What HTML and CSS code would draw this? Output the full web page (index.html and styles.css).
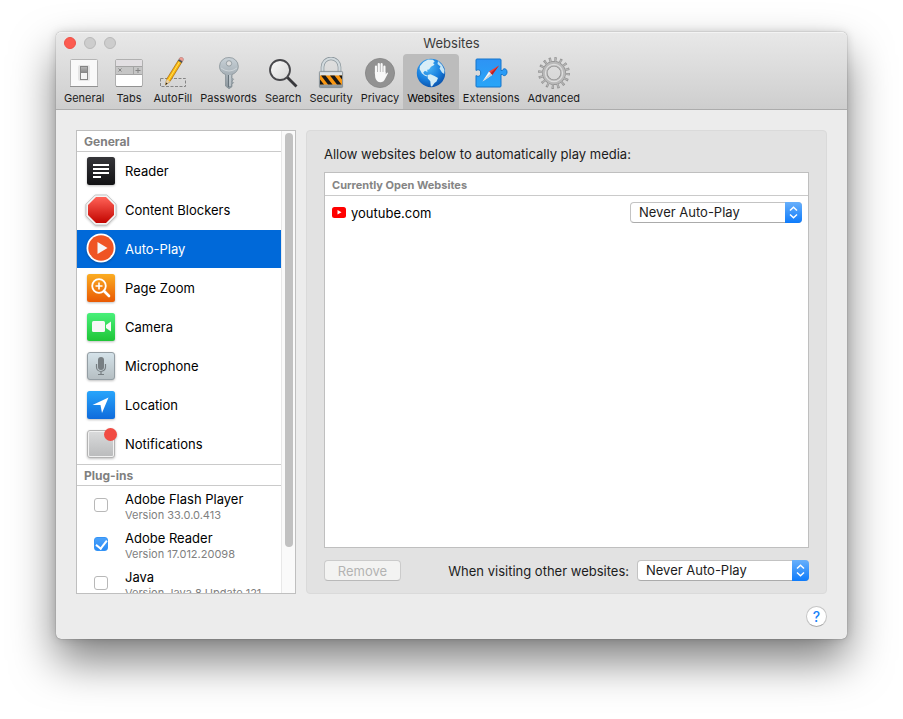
FILE: index.html
```html
<!DOCTYPE html>
<html lang="en">
<head>
<meta charset="utf-8">
<title>Websites</title>
<link rel="stylesheet" href="styles.css">
</head>
<body>
<svg class="defs" width="0" height="0" aria-hidden="true">
  <defs>
    <linearGradient id="steel" x2="0" y2="1"><stop stop-color="#c9d2d8"/><stop offset="1" stop-color="#8a949b"/></linearGradient>
    <linearGradient id="silver" x2="1" y2="1"><stop stop-color="#fafafa"/><stop offset="1" stop-color="#d5d5d5"/></linearGradient>
    <linearGradient id="gray" x2="0" y2="1"><stop stop-color="#b4b4b4"/><stop offset="1" stop-color="#858585"/></linearGradient>
    <radialGradient id="ocean" cx=".4" cy=".3" r=".75"><stop stop-color="#4db8f8"/><stop offset=".6" stop-color="#167ddd"/><stop offset="1" stop-color="#0b4fa6"/></radialGradient>
    <linearGradient id="puzzle" x2="0" y2="1"><stop stop-color="#2e93f4"/><stop offset="1" stop-color="#27a5f8"/></linearGradient>
    <linearGradient id="black" x2="0" y2="1"><stop stop-color="#353539"/><stop offset="1" stop-color="#121214"/></linearGradient>
    <linearGradient id="red" x2="0" y2="1"><stop stop-color="#ff6257"/><stop offset="1" stop-color="#c20500"/></linearGradient>
    <linearGradient id="orange" x2="0" y2="1"><stop stop-color="#fbad22"/><stop offset="1" stop-color="#e95903"/></linearGradient>
    <linearGradient id="green" x2="0" y2="1"><stop stop-color="#48f07a"/><stop offset="1" stop-color="#1fc537"/></linearGradient>
    <linearGradient id="mist" x2="0" y2="1"><stop stop-color="#d5e3ea"/><stop offset="1" stop-color="#b5bec2"/></linearGradient>
    <linearGradient id="blue" x2="0" y2="1"><stop stop-color="#28a5fb"/><stop offset="1" stop-color="#0f6bdc"/></linearGradient>
    <linearGradient id="note" x2="0" y2="1"><stop stop-color="#d9dadb"/><stop offset="1" stop-color="#bbbcbd"/></linearGradient>
  </defs>
</svg>

<main class="window">
  <header class="chrome">
    <div class="titlebar">
      <div class="lights">
        <button class="light close" aria-label="Close"></button>
        <button class="light" aria-label="Minimize" disabled></button>
        <button class="light" aria-label="Zoom" disabled></button>
      </div>
      <h1>Websites</h1>
    </div>
    <nav class="toolbar">
      <button class="tool">
        <svg viewBox="0 0 32 32"><rect x="2.500" y="2.500" width="27" height="27" rx="1" fill="#f9f9f9" stroke="#b5b5b5"/><path d="M2 29.500h28" stroke="#919191"/><rect x="10" y="8" width="12" height="16" rx="2" fill="#e5e5e5"/><rect x="12.500" y="9.500" width="7" height="13" fill="#f4f4f4" stroke="#858585"/><rect x="13" y="10" width="6" height="6" fill="url(#gray)"/></svg>
        <span>General</span>
      </button>
      <button class="tool">
        <svg viewBox="0 0 32 32"><rect x="2.500" y="2.500" width="27" height="27" rx="1.500" fill="#fff" stroke="#b0b0b0"/><path d="M3 3h26v6H3z" fill="#e2dfe2"/><path d="M3 9h26v8H3z" fill="#c6c6c6"/><path d="M3 9.500h26M3 17.500h26M20.500 9v8" stroke="#a4a4a4"/><path d="m5.500 11.500 3 3m0-3-3 3M22.500 13.500h5M25 11v5" stroke="#858585"/><path d="M3 29.500h26" stroke="#929292"/></svg>
        <span>Tabs</span>
      </button>
      <button class="tool">
        <svg viewBox="0 0 32 32"><rect x="3.500" y="21.500" width="25" height="8" fill="none" stroke="#858585" stroke-dasharray="3 1.500"/><path d="m8.500 28 1.200-6L21.500 3l3.500 2-12 19.500z" fill="#fbb50d" stroke="#9c6714" stroke-width=".7"/><path d="m11.500 23 11.500-19" stroke="#ffe35a"/><path d="m8.500 28 1.200-6 3.300 2.500z" fill="#ead1a3"/><path d="m8.500 28 .6-2.600 1.500 1z" fill="#222"/><path d="m21 3.800 3.700 2.200 1-1.700-3.700-2.200z" fill="#4c5258"/><path d="m22 2 3.700 2.300.7-1.300q.4-2-1.300-2.600-1.600-.4-2.300.4z" fill="#ef9c93" stroke="#a66e68" stroke-width=".5"/></svg>
        <span>AutoFill</span>
      </button>
      <button class="tool">
        <svg viewBox="0 0 32 32"><path fill-rule="evenodd" d="M16 .500a9 9 0 0 0-9.500 8.800c0 4 2.500 7 6 8.200V29l3.500 2.700 3-2v-2.500l1.500-1.500-1.500-1.500 1.500-2-1.500-1.500v-3.200c3.500-1.200 6.300-4.200 6.300-8.200A9 9 0 0 0 16 .5zm0 3.200a2.700 2.700 0 1 1 0 5.400 2.700 2.700 0 0 1 0-5.400z" fill="url(#steel)" stroke="#7e898f" stroke-width=".7"/><path d="M15.500 18v12" stroke="#67737b"/><path d="M17 18v11" stroke="#e0e6ea"/><path d="M8 11q8 6 16 0" fill="none" stroke="#e0e6ea" stroke-width=".6"/></svg>
        <span>Passwords</span>
      </button>
      <button class="tool">
        <svg viewBox="0 0 32 32"><path d="m20 20 9.500 9.500" stroke="#37373b" stroke-width="2.800"/><circle cx="13" cy="13" r="10" fill="url(#silver)" stroke="#47474b" stroke-width="1.800"/></svg>
        <span>Search</span>
      </button>
      <button class="tool">
        <svg viewBox="0 0 32 32"><path d="M7.500 15v-5a8.500 8.500 0 0 1 17 0v5" fill="none" stroke="#8b969c" stroke-width="3.600"/><path d="M7.500 15v-5a8.500 8.500 0 0 1 17 0v5" fill="none" stroke="#d2dade" stroke-width="2.200"/><rect x="4.400" y="14.400" width="23.200" height="16.200" rx="1" fill="url(#steel)" stroke="#7c868b" stroke-width=".8"/><path d="M5 15.500h22v3H5z" fill="#dde3e6"/><path d="M5 18.500h22v9H5z" fill="#fa9710"/><path d="M6 18.500h4.500l7 9H13zM15 18.500h4.500l7 9H22zM5 22.500l4 5H5zM24 18.500h3v4z" fill="#181818"/></svg>
        <span>Security</span>
      </button>
      <button class="tool">
        <svg viewBox="0 0 32 32"><circle cx="16" cy="16" r="14.600" fill="#929292" stroke="#848484" stroke-width=".8"/><path d="M12 17V9.500M14.800 16V7M17.600 16V7.200M20.400 17V9.500" stroke="#f8f8f8" stroke-width="2.200" stroke-linecap="round"/><path d="M10.900 15h10.600v2.500l1.300-1.500q1.200-.9 1.200.3L20.500 23q-.8 2-3.500 2.300-4.800.2-5.800-5z" fill="#f8f8f8"/></svg>
        <span>Privacy</span>
      </button>
      <button class="tool current" aria-current="page">
        <svg viewBox="0 0 32 32"><circle cx="16" cy="16" r="14.200" fill="url(#ocean)"/><path d="m5 9 3.500-4L13 2.600l5 .2 1.700 2L18 6l1.500 1.800-3.500 2-2 2.800-1.800.2.300 2.200-2.500-1.200-1.700 1.800 1 2.200 2.600.8-1-.1L7 16.500 4.500 12z" fill="#d9eef7"/><path d="m12.500 18 3-.8 4 1.800 3.500 2-1.500 3.500-2 1.500-2.500 3.500-1.200-.3-.5-5-2.500-2.700z" fill="#d4ecf6"/><path d="m23 4 4 4 2.500 5-.3 4-2.200-1.500-2.500-4 1-2-3-2.500z" fill="#c4e5f6"/><path d="M8.500 17.500 12 19" stroke="#d4ecf6"/></svg>
        <span>Websites</span>
      </button>
      <button class="tool">
        <svg class="wide" viewBox="0 0 34 32"><path d="M2 3q0-1 1-1h23q1 0 1 1v10.500h1.500c.5-2.500 4.500-2.500 4.500 1.500s-4 4.500-4.500 2.500H27V29q0 1-1 1H3q-1 0-1-1V18.500c2 1.500 4.700 1 4.700-2.500S4 12.300 2 13.500z" fill="url(#puzzle)" stroke="#1475ca"/><path d="m25 8.500-10 6 3.200 3.500z" fill="#f1433a"/><path d="m8.500 24.500 6.500-10 3.200 3.500z" fill="#f7f7f7"/><path d="m25 8.500-8.500 7.800 1.700 1.700z" fill="#b92025"/><path d="m8.500 24.500 8-8.200 1.700 1.700z" fill="#c4ced6"/></svg>
        <span>Extensions</span>
      </button>
      <button class="tool">
        <svg viewBox="0 0 32 32"><circle cx="16" cy="16" r="13.600" fill="none" stroke="#8f8f8f" stroke-width="4.600" stroke-dasharray="2.200 3.141"/><circle cx="16" cy="16" r="9.200" fill="none" stroke="#8a8a8a" stroke-width="5.400"/><circle cx="16" cy="16" r="13.200" fill="none" stroke="#b5b5b5" stroke-width="4" stroke-dasharray="1.200 3.984" stroke-dashoffset="-.5"/><circle cx="16" cy="16" r="9.200" fill="none" stroke="#b9b9b9" stroke-width="4.200"/><circle cx="16" cy="16" r="8.600" fill="none" stroke="#dedede" stroke-width="1.200"/></svg>
        <span>Advanced</span>
      </button>
    </nav>
  </header>

  <div class="content">
    <aside class="sidebar">
      <div class="list">
        <h2>General</h2>
        <ul>
          <li><button class="row"><svg viewBox="0 0 32 32"><rect x="2" y="2" width="28" height="28" rx="2.500" fill="url(#black)"/><path d="M8 10h16M8 14h16M8 18h16M8 22h8" stroke="#fff" stroke-width="1.800"/></svg>Reader</button></li>
          <li><button class="row"><svg viewBox="0 0 32 32"><path d="M10.200 1h11.600L31 10.200v11.600L21.800 31H10.200L1 21.800V10.200z" fill="#f5f5f5" stroke="#bababa" stroke-width=".8"/><path d="M11 3h10l8 8v10l-8 8H11l-8-8V11z" fill="url(#red)"/></svg>Content Blockers</button></li>
          <li><button class="row selected" aria-current="true"><svg viewBox="0 0 32 32"><circle cx="16" cy="15" r="14.500" fill="#fff"/><circle cx="16" cy="15" r="12.700" fill="#ef5424"/><path d="M12.500 9v12L22.500 15z" fill="#f6f6f6"/></svg>Auto-Play</button></li>
          <li><button class="row"><svg viewBox="0 0 32 32"><rect x="2" y="2" width="28" height="28" rx="2.500" fill="url(#orange)"/><circle cx="14" cy="14" r="6.800" fill="none" stroke="#fff" stroke-width="1.800"/><path d="m19 19 5 5" stroke="#fff" stroke-width="2.600" stroke-linecap="round"/><path d="M14 10.500v7M10.500 14h7" stroke="#fff" stroke-width="1.600"/></svg>Page Zoom</button></li>
          <li><button class="row"><svg viewBox="0 0 32 32"><rect x="2" y="2" width="28" height="28" rx="2.500" fill="url(#green)"/><rect x="7" y="10" width="13" height="11" rx="1.500" fill="#f7f7f7"/><path d="m21 14 5-3.500v10L21 17z" fill="#f7f7f7"/></svg>Camera</button></li>
          <li><button class="row"><svg viewBox="0 0 32 32"><rect x="2.500" y="2.500" width="27" height="27" rx="2.500" fill="url(#mist)" stroke="#949ea4"/><rect x="13" y="7" width="6" height="13" rx="3" fill="#777e82"/><path d="M11.500 14v3a4.500 4.500 0 0 0 9 0v-3M16 21.500V24M13 24.500h6" fill="none" stroke="#777e82" stroke-width="1.200"/></svg>Microphone</button></li>
          <li><button class="row"><svg viewBox="0 0 32 32"><rect x="2" y="2" width="28" height="28" rx="2.500" fill="url(#blue)"/><path d="M23.500 8.500 7.500 16h8l1.500 8z" fill="#fff"/></svg>Location</button></li>
          <li><button class="row"><svg viewBox="0 0 32 32"><rect x="2.500" y="2.500" width="27" height="27" rx="2.500" fill="#f1f1f1" stroke="#b3b3b3"/><rect x="4" y="4" width="24" height="24" rx="1" fill="url(#note)"/><circle cx="25.500" cy="6.500" r="6.500" fill="#f14b43"/></svg>Notifications</button></li>
        </ul>
        <h2 class="divided">Plug-ins</h2>
        <ul>
          <li><label class="row plugin"><input type="checkbox"><span>Adobe Flash Player<small>Version 33.0.0.413</small></span></label></li>
          <li><label class="row plugin"><input type="checkbox" checked><span>Adobe Reader<small>Version 17.012.20098</small></span></label></li>
          <li><label class="row plugin"><input type="checkbox"><span>Java<small>Version Java 8 Update 121</small></span></label></li>
        </ul>
      </div>
      <div class="track"><div class="thumb"></div></div>
    </aside>

    <section class="panel">
      <p>Allow websites below to automatically play media:</p>
      <div class="sites">
        <h3>Currently Open Websites</h3>
        <div class="site">
          <svg viewBox="0 0 14 12"><rect width="14" height="11" rx="2.500" fill="#f00"/><path d="M5.500 3v4.600L9.500 5.300z" fill="#fff"/></svg>
          <label for="youtube">youtube.com</label>
          <span class="popup">
            <select id="youtube"><option>Never Auto-Play</option><option>Stop Media with Sound</option><option>Allow All Auto-Play</option></select>
            <svg viewBox="0 0 17 21"><path d="m5 8.500 3.500-3.300L12 8.500M5 12.500l3.500 3.300 3.500-3.300"/></svg>
          </span>
        </div>
      </div>
      <div class="actions">
        <button class="remove" disabled>Remove</button>
        <label for="others">When visiting other websites:</label>
        <span class="popup">
          <select id="others"><option>Never Auto-Play</option><option>Stop Media with Sound</option><option>Allow All Auto-Play</option></select>
          <svg viewBox="0 0 17 21"><path d="m5 8.500 3.500-3.300L12 8.500M5 12.500l3.500 3.300 3.500-3.300"/></svg>
        </span>
      </div>
    </section>
  </div>
  <footer><button class="help" aria-label="Help">?</button></footer>
</main>
</body>
</html>
```
FILE: styles.css
```css
* { box-sizing: border-box; }

body {
  margin: 0;
  height: 100vh;
  padding: 32px 56px 80px;
  display: flex;
  background: #fff;
  color: #1c1c1c;
  font: 13px/16px Inter, "Liberation Sans", sans-serif;
}

h1, h2, h3, p, ul { margin: 0; padding: 0; }
ul { list-style: none; }
button, select, input { margin: 0; font: inherit; color: inherit; }
button { padding: 0; border: 0; background: none; }
svg { display: block; flex: none; }
.defs { position: absolute; }

.window {
  flex: 1;
  min-width: 0;
  display: flex;
  flex-direction: column;
  background: #ececec;
  border-radius: 5px;
  box-shadow: 0 0 1px rgba(0, 0, 0, .6), 0 0 10px rgba(0, 0, 0, .15), 0 22px 44px rgba(0, 0, 0, .5);
}

.chrome {
  background: linear-gradient(#e8e8e8, #cecece);
  border-top: 1px solid #f3f3f3;
  border-bottom: 1px solid #acacac;
  border-radius: 5px 5px 0 0;
}

.titlebar {
  height: 21px;
  padding: 0 8px;
  display: grid;
  grid-template-columns: 1fr auto 1fr;
  align-items: center;
}
.titlebar h1 { font-size: 13px; line-height: 18px; font-weight: 400; color: #3b3b3b; padding-bottom: 2px; }
.lights { display: flex; gap: 8px; padding-bottom: 1px; }
.light {
  width: 12px;
  height: 12px;
  border: 1px solid #b9b9b9;
  border-radius: 50%;
  background: #cdcdcd;
}
.close { background: #fc5b50; border-color: #ee5046; }

.toolbar { display: flex; padding: 0 4px; }
.tool {
  height: 55px;
  min-width: 41px;
  padding: 3px 4px 0;
  display: flex;
  flex-direction: column;
  align-items: center;
  gap: 1px;
  font-size: 11px;
  border-radius: 4px 4px 0 0;
}
.tool svg { width: 32px; height: 32px; }
.tool svg.wide { width: 34px; }
.current { background: #bcbcbc; color: #000; }

.content {
  flex: 1;
  min-height: 0;
  display: flex;
  gap: 10px;
  padding: 20px 20px 0;
}

.sidebar {
  width: 220px;
  flex: none;
  display: flex;
  background: #fff;
  border: 1px solid #bfbfbf;
  color: #000;
}
.list { flex: 1; min-width: 0; overflow: hidden; }
.track { width: 14px; padding: 2px 2px 0 3px; background: #fafafa; border-left: 1px solid #e8e8e8; }
.thumb { height: 90%; border-radius: 4px; background: #c1c1c1; }

h2 {
  height: 21px;
  padding-left: 7px;
  font-size: 12px;
  line-height: 21px;
  font-weight: 700;
  color: #808080;
  border-bottom: 1px solid #cacaca;
}
h2.divided { height: 22px; border-top: 1px solid #cacaca; }

li { padding-bottom: 1px; }
.row {
  width: 100%;
  height: 38px;
  padding-left: 8px;
  display: flex;
  align-items: center;
  gap: 8px;
  text-align: left;
}
.row svg { width: 32px; height: 32px; filter: drop-shadow(0 1px 1px rgba(0, 0, 0, .25)); }
.selected { background: #0069d9; color: #fff; }

.plugin { padding-left: 17px; gap: 17px; white-space: nowrap; }
.plugin span { padding-top: 4px; }
.plugin small { display: block; font-size: 11px; line-height: 16px; color: #808080; }
.plugin input {
  appearance: none;
  flex: none;
  display: grid;
  justify-content: center;
  width: 14px;
  height: 14px;
  border: 1px solid #b8b8b8;
  border-radius: 3px;
  background: #fff;
}
.plugin input:checked {
  border-color: #3594f6;
  background: linear-gradient(#4ba2fb, #2a8bf5);
}
.plugin input:checked::after {
  content: "";
  width: 5px;
  height: 9px;
  border: solid #fff;
  border-width: 0 2px 2px 0;
  transform: rotate(38deg);
}

.panel {
  flex: 1;
  min-width: 0;
  display: flex;
  flex-direction: column;
  padding: 15px 17px 12px;
  background: #e2e2e2;
  border: 1px solid #dadada;
  border-radius: 4px;
}
.sites {
  flex: 1;
  margin: 10px 0 12px;
  background: #fff;
  border: 1px solid #bfbfbf;
}
h3 {
  height: 23px;
  padding-left: 7px;
  font-size: 11px;
  line-height: 24px;
  font-weight: 700;
  color: #858585;
  border-bottom: 1px solid #cacaca;
}
.site {
  display: flex;
  align-items: center;
  gap: 5px;
  padding: 6px 6px 6px 7px;
  color: #000;
}
.site > svg { width: 14px; height: 12px; }
.site .popup { margin-left: auto; }

.popup { display: grid; width: 172px; color: #1c1c1c; }
.popup select, .popup svg { grid-area: 1 / 1; }
.popup select {
  appearance: none;
  width: 100%;
  height: 21px;
  padding: 0 20px 1px 8px;
  border: 1px solid #c3c3c3;
  border-bottom-color: #ababab;
  border-radius: 4px;
  background: #fff;
}
.popup svg {
  width: 17px;
  height: 21px;
  justify-self: end;
  border-radius: 0 4px 4px 0;
  background: linear-gradient(#68b0fb, #0e7bfb);
  fill: none;
  stroke: #fff;
  stroke-width: 1.5px;
  pointer-events: none;
}

.actions { display: flex; align-items: center; gap: 8px; }
.remove {
  width: 77px;
  height: 21px;
  margin-right: auto;
  border: 1px solid #cbcbcb;
  border-bottom-color: #b9b9b9;
  border-radius: 4px;
  background: #f3f3f2;
  color: #b3b3b3;
}

footer { display: flex; justify-content: flex-end; padding: 12px 20px; }
.help {
  width: 21px;
  height: 21px;
  border-radius: 50%;
  background: #fff;
  border: 1px solid #c5c5c5;
  border-bottom-color: #a9a9a9;
  color: #1a83f7;
  font-size: 14px;
  font-weight: 500;
}
```
